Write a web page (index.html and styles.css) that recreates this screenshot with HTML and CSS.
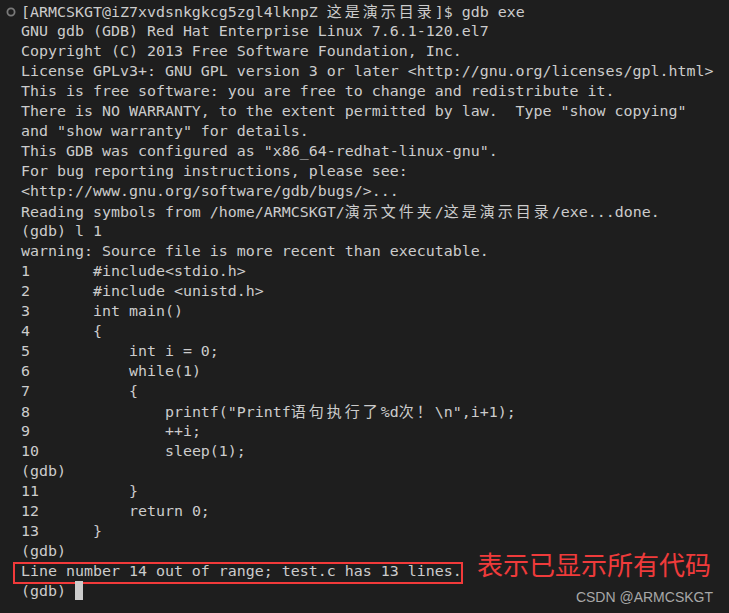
FILE: index.html
```html
<!DOCTYPE html>
<html>
<head>
<meta charset="utf-8">
<link rel="stylesheet" href="styles.css">
</head>
<body>
<div class="term">
<div class="ln first"><svg class="mark" width="12" height="12" viewBox="0 0 12 12"><circle cx="6" cy="6" r="3.6" fill="none" stroke="#7a7a7a" stroke-width="1.8"/></svg>[ARMCSKGT@iZ7xvdsnkgkcg5zgl4lknpZ <span class="cjk">这是演示目录</span>]$ gdb exe</div>
<div class="ln">GNU gdb (GDB) Red Hat Enterprise Linux 7.6.1-120.el7</div>
<div class="ln">Copyright (C) 2013 Free Software Foundation, Inc.</div>
<div class="ln">License GPLv3+: GNU GPL version 3 or later &lt;http://gnu.org/licenses/gpl.html&gt;</div>
<div class="ln">This is free software: you are free to change and redistribute it.</div>
<div class="ln">There is NO WARRANTY, to the extent permitted by law.  Type "show copying"</div>
<div class="ln">and "show warranty" for details.</div>
<div class="ln">This GDB was configured as "x86_64-redhat-linux-gnu".</div>
<div class="ln">For bug reporting instructions, please see:</div>
<div class="ln">&lt;http://www.gnu.org/software/gdb/bugs/&gt;...</div>
<div class="ln">Reading symbols from /home/ARMCSKGT/<span class="cjk">演示文件夹</span>/<span class="cjk">这是演示目录</span>/exe...done.</div>
<div class="ln">(gdb) l 1</div>
<div class="ln">warning: Source file is more recent than executable.</div>
<div class="ln">1	#include&lt;stdio.h&gt;</div>
<div class="ln">2	#include &lt;unistd.h&gt;</div>
<div class="ln">3	int main()</div>
<div class="ln">4	{</div>
<div class="ln">5	    int i = 0;</div>
<div class="ln">6	    while(1)</div>
<div class="ln">7	    {</div>
<div class="ln">8	        printf("Printf<span class="cjk">语句执行了</span>%d<span class="cjk">次！</span>\n",i+1);</div>
<div class="ln">9	        ++i;</div>
<div class="ln">10	        sleep(1);</div>
<div class="ln">(gdb)</div>
<div class="ln">11	    }</div>
<div class="ln">12	    return 0;</div>
<div class="ln">13	}</div>
<div class="ln">(gdb)</div>
<div class="ln marked">Line number 14 out of range; test.c has 13 lines.<span class="box"></span><span class="note">表示已显示所有代码</span></div>
<div class="ln">(gdb) <span class="cursor"></span></div>
</div>
<div class="watermark">CSDN @ARMCSKGT</div>
</body>
</html>
```
FILE: styles.css
```css
html, body {
  margin: 0;
  padding: 0;
}
body {
  background: #1e1e1e;
  width: 729px;
  height: 613px;
  overflow: hidden;
  position: relative;
}
.term {
  padding: 1px 0 0 21px;
  font-family: "DejaVu Sans Mono", "Liberation Mono", monospace;
  font-size: 14.95px;
  color: #cccccc;
  tab-size: 8;
  -moz-tab-size: 8;
}
.ln {
  height: 20px;
  line-height: 20px;
  white-space: pre;
  position: relative;
}
.mark {
  position: absolute;
  left: -16px;
  top: 5px;
}
.cjk {
  font-family: "Noto Sans CJK SC", sans-serif;
  font-size: 15px;
  letter-spacing: 3px;
  line-height: 20px;
}
.box {
  position: absolute;
  left: -8px;
  top: 1px;
  width: 450px;
  height: 22px;
  box-sizing: border-box;
  border: 2px solid #f23a3a;
}
.note {
  position: absolute;
  left: 456px;
  top: -10px;
  font-family: "Noto Sans CJK SC", sans-serif;
  font-size: 26px;
  line-height: 26px;
  color: #ef3b3b;
  letter-spacing: 0;
}
.cursor {
  display: inline-block;
  width: 8px;
  height: 19px;
  background: #cccccc;
  vertical-align: top;
}
.watermark {
  position: absolute;
  right: 16px;
  bottom: 8px;
  font-family: "Liberation Sans", Arial, sans-serif;
  font-size: 14px;
  color: #a8a8a8;
}
```
